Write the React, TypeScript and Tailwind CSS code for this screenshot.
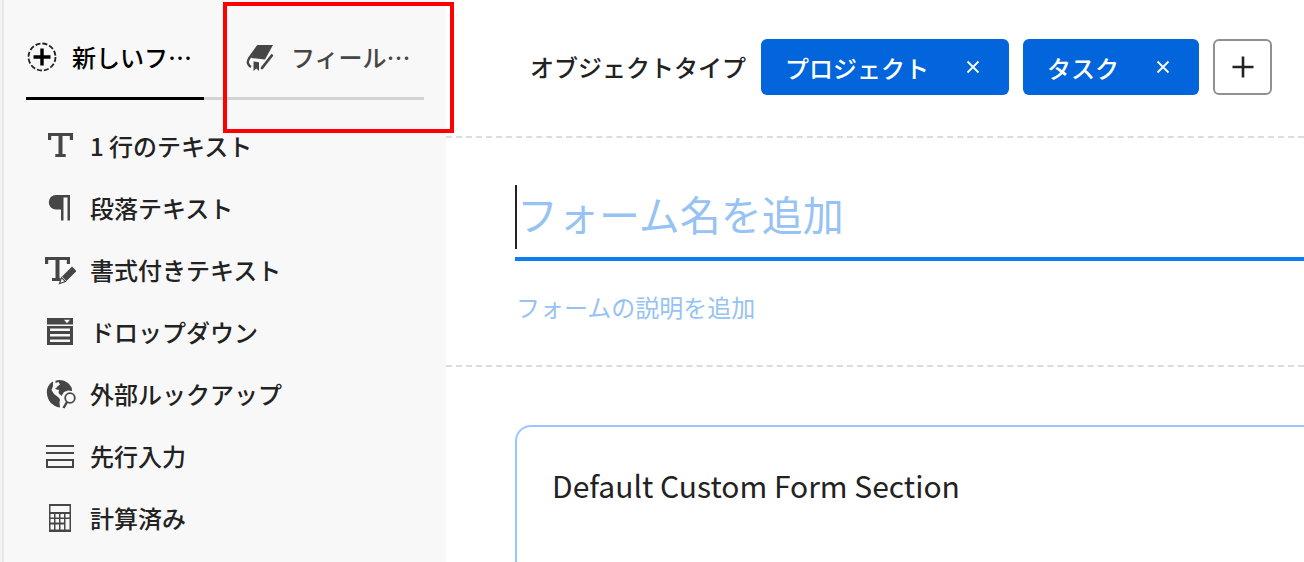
import type { ReactNode } from "react";

const INK = "#464646";

function Icon({ children }: { children: ReactNode }) {
  return (
    <svg width="32" height="32" viewBox="0 0 32 32" fill={INK} className="shrink-0" aria-hidden="true">
      {children}
    </svg>
  );
}

const TextIcon = () => (
  <Icon>
    <path d="M4 3h25v7h-3.2V6h-7.3v18h3.2v3H11.3v-3h3.2V6H7.2v4H4z" />
  </Icon>
);

const ParagraphIcon = () => (
  <Icon>
    <path d="M12 3H26v25.500h-2.500V5.500h-4v23H17V17.500h-5a7.200 7.200 0 0 1 0-14.500z" />
  </Icon>
);

const RichTextIcon = () => (
  <Icon>
    <path d="M1 3h25v7h-3.2V6h-7.3v18h1v3H8v-3h3.5V6H4.2v4H1z" />
    <path d="M28 12.500l4.500 4.500-10 10-4.500-4.500z" />
    <path d="M17.500 23.600l4 4-6 2z" fill="#f8f8f8" stroke={INK} strokeWidth="1.2" />
  </Icon>
);

const DropdownIcon = () => (
  <Icon>
    <path fillRule="evenodd" d="M3 2h26v6.500H3zM20 3.800l3 3.400 3-3.400z" />
    <path fillRule="evenodd" d="M3 10h26v19H3zM6 12.500v2.500h20v-2.500zM6 18v2.500h20v-2.500zM6 23.500v2.500h20v-2.500z" />
  </Icon>
);

const LookupIcon = () => (
  <Icon>
    <path d="M9 3.500C4.500 6 2.200 11 3 16c.5 6 5 12.500 13 13.500l-.5-5.500c1-2 .5-3.500-1.500-5l-4-3-2.500-4 1.500-4z" />
    <path d="M11.500 2.700C18 .6 25 4 27.800 10l.2 3-4-.5-4 1.500-2.500 4-3-3 .5-3-4-1 3-3 2-1.500-1.500-2.500-3 1z" />
    <circle cx="26" cy="20" r="4.800" fill="none" stroke={INK} strokeWidth="1.800" />
    <path d="M23 24l-3.500 6" stroke={INK} strokeWidth="2.400" />
  </Icon>
);

const TypeaheadIcon = () => (
  <Icon>
    <path d="M2 5h28v2H2zM2 12h28v2H2z" />
    <path d="M3 20h26v7H3z" fill="none" stroke={INK} strokeWidth="2" />
  </Icon>
);

const CalculatorIcon = () => (
  <Icon>
    <path
      fillRule="evenodd"
      d="M5 2h22v28H5zM6.500 4v6h19V4zM6.500 12v3.500H10V12zM11.500 12v3.500H15V12zM16.500 12v3.500H20V12zM21.500 12v3.500h4V12zM6.500 17v3.500H10V17zM11.500 17v3.500H15V17zM16.500 17v3.500H20V17zM21.500 17v10.500h4V17zM6.500 22.500v5H10v-5zM11.500 22.500v5H15v-5zM16.500 22.500v5H20v-5z"
    />
  </Icon>
);

const NewFieldIcon = () => (
  <Icon>
    <circle cx="16" cy="16" r="13.500" fill="none" stroke="#222" strokeWidth="1.800" strokeDasharray="5 2.070" />
    <path d="M14.300 7.500h3.400v6.800h6.800v3.400h-6.800v6.800h-3.400v-6.800H7.500v-3.400h6.800z" fill="#000" />
  </Icon>
);

const LibraryIcon = () => (
  <Icon>
    <path d="M12.500 4H28l-8 14.500L6 17z" />
    <path d="M13 5L4 17.500c-2 3.500-1.500 6.500 2 8.500" fill="none" stroke={INK} strokeWidth="2.400" />
    <path d="M8.500 20.500l5.500.8V30l-2.700-2.500L8.500 30z" />
    <path d="M17 27l9.800-12.500" fill="none" stroke={INK} strokeWidth="2.800" strokeLinecap="round" />
  </Icon>
);

const FIELDS = [
  { label: "1 行のテキスト", icon: TextIcon },
  { label: "段落テキスト", icon: ParagraphIcon },
  { label: "書式付きテキスト", icon: RichTextIcon },
  { label: "ドロップダウン", icon: DropdownIcon },
  { label: "外部ルックアップ", icon: LookupIcon },
  { label: "先行入力", icon: TypeaheadIcon },
  { label: "計算済み", icon: CalculatorIcon },
];

function Chip({ label }: { label: string }) {
  return (
    <span className="flex h-14 shrink-0 items-center rounded-md bg-[#0265dc] px-6 font-medium text-white">
      <span className="pt-0.5">{label}</span>
      <button type="button" aria-label={`${label}を削除`} className="ml-8 p-1">
        <svg width="16" height="16" viewBox="0 0 16 16" fill="none" stroke="#fff" strokeWidth="1.800">
          <path d="M2.500 2.500l11 11M13.500 2.500l-11 11" />
        </svg>
      </button>
    </span>
  );
}

export default function App() {
  return (
    <div className="flex min-h-screen overflow-hidden border-l-2 border-[#f3f3f3] bg-white font-['Noto_Sans_CJK_JP',sans-serif] text-2xl leading-9 text-[#222]">
      <aside className="relative w-[444px] shrink-0 border-l-2 border-[#e8e8e8] bg-[#f8f8f8] pl-[22px]">
        <div role="tablist" className="flex pt-4 pr-[22px]">
          <button
            type="button"
            role="tab"
            aria-selected="true"
            className="flex h-[84px] w-[178px] items-center gap-[14px] border-b-3 border-black font-medium whitespace-nowrap text-black"
          >
            <NewFieldIcon />
            新しいフ…
          </button>
          <button
            type="button"
            role="tab"
            aria-selected="false"
            className="flex h-[84px] flex-1 items-center gap-[14px] border-b-3 border-[#d3d3d3] pl-[41px] font-medium whitespace-nowrap text-[#464646]"
          >
            <LibraryIcon />
            フィール…
          </button>
        </div>
        <ul className="pt-[15px] pl-[18px]">
          {FIELDS.map(({ label, icon: FieldIcon }) => (
            <li key={label}>
              <button type="button" className="flex h-[62px] items-center gap-[14px] font-medium whitespace-nowrap">
                <FieldIcon />
                {label}
              </button>
            </li>
          ))}
        </ul>
        <div className="pointer-events-none absolute top-0.5 left-[219px] z-10 h-[131px] w-[231px] border-4 border-[#fe0000]" />
      </aside>

      <main className="flex min-w-0 flex-1 flex-col">
        <div className="flex items-center gap-[14px] border-b-2 border-dashed border-[#dcdcdc] pt-[39px] pb-[41px] pl-[84px]">
          <span className="pr-px font-medium whitespace-nowrap">オブジェクトタイプ</span>
          <Chip label="プロジェクト" />
          <Chip label="タスク" />
          <button
            type="button"
            aria-label="オブジェクトタイプを追加"
            className="flex h-14 w-[59px] shrink-0 items-center justify-center rounded-md border-2 border-[#909090]"
          >
            <svg width="24" height="24" viewBox="0 0 24 24" stroke="#222" strokeWidth="2.600">
              <path d="M12 1.500v21M1.500 12h21" />
            </svg>
          </button>
        </div>

        <div className="border-b-2 border-dashed border-[#dcdcdc] pt-[47px] pb-10 pl-[69px]">
          <div className="flex items-center border-b-4 border-[#0d7df2] pb-2">
            <span className="h-16 w-0.5 bg-[#222]" />
            <input
              aria-label="フォーム名"
              placeholder="フォーム名を追加"
              className="h-16 min-w-0 flex-1 pb-2 text-[41px] outline-none placeholder:text-[#96c3f3]"
            />
          </div>
          <input
            aria-label="フォームの説明"
            placeholder="フォームの説明を追加"
            className="mt-7 h-9 w-full pl-px outline-none placeholder:text-[#96c3f3]"
          />
        </div>

        <div className="flex flex-1 pt-[58px] pl-[69px]">
          <section className="flex-1 rounded-tl-2xl border-t-2 border-l-2 border-[#96c8ff] px-[35px] pt-9">
            <h2 className="text-[30px] leading-[44px]">Default Custom Form Section</h2>
          </section>
        </div>
      </main>
    </div>
  );
}
